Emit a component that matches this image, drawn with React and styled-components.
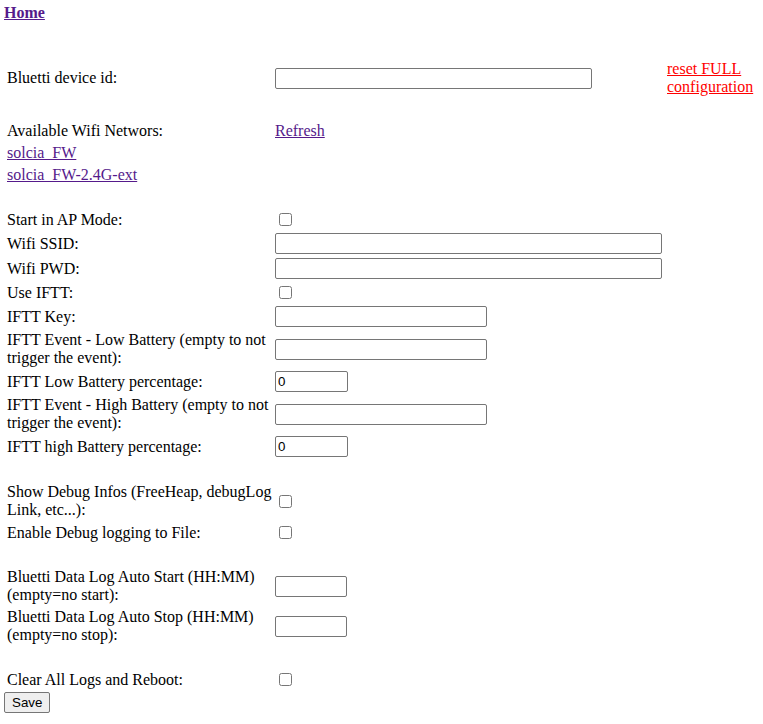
import React from 'react';
import styled, { createGlobalStyle } from 'styled-components';

const GlobalStyle = createGlobalStyle`
  body {
    margin: 4px;
    font-family: "Liberation Serif", "Times New Roman", serif;
    font-size: 16px;
    line-height: 18px;
    color: #000;
    background: #fff;
  }
`;

const HomeLink = styled.a`
  display: block;
  width: max-content;
  font-weight: bold;
  color: #551a8b;
  text-decoration: underline;
`;

const Table = styled.table`
  width: 100%;
  margin-top: 35px;
  border-collapse: separate;
  border-spacing: 2px;
  table-layout: fixed;
`;

const Cell = styled.td`
  padding: 1px;
  vertical-align: middle;
  height: 18px;
`;

// labels keep the line breaks of the original page
const LabelCell = styled(Cell)`
  white-space: pre;
  overflow: visible;
`;

const LinkCell = styled.a`
  color: ${(p) => p.$color || '#551a8b'};
  text-decoration: underline;
  cursor: pointer;
`;

const TextInput = styled.input`
  display: block;
  box-sizing: border-box;
  width: ${(p) => p.$w}px;
  height: 21px;
  margin: 0;
  padding: 1px 2px;
  border: 1px solid #767676;
  border-radius: 2px;
  font-family: "Liberation Sans", Arial, sans-serif;
  font-size: 13.33px;
  color: #000;
  background: #fff;
`;

const Check = styled.input`
  display: block;
  width: 13px;
  height: 13px;
  margin: 3px 3px 3px 4px;
`;

const SaveButton = styled.button`
  display: block;
  box-sizing: border-box;
  height: 21px;
  margin: 0;
  padding: 1px 7px;
  border: 1px solid #767676;
  border-radius: 2px;
  background: #efefef;
  font-family: "Liberation Sans", Arial, sans-serif;
  font-size: 13.33px;
  color: #000;
`;

const rows = [
  { label: 'Bluetti device id:', input: 317, reset: true },
  { empty: true },
  { label: 'Available Wifi Networs:', link: 'Refresh' },
  { linkLabel: 'solcia_FW' },
  { linkLabel: 'solcia_FW-2.4G-ext' },
  { empty: true },
  { label: 'Start in AP Mode:', check: true },
  { label: 'Wifi SSID:', input: 387 },
  { label: 'Wifi PWD:', input: 387 },
  { label: 'Use IFTT:', check: true },
  { label: 'IFTT Key:', input: 212 },
  { label: 'IFTT Event - Low Battery (empty to not\ntrigger the event):', input: 212 },
  { label: 'IFTT Low Battery percentage:', input: 73, value: '0' },
  { label: 'IFTT Event - High Battery (empty to not\ntrigger the event):', input: 212 },
  { label: 'IFTT high Battery percentage:', input: 73, value: '0' },
  { empty: true },
  { label: 'Show Debug Infos (FreeHeap, debugLog\nLink, etc...):', check: true },
  { label: 'Enable Debug logging to File:', check: true },
  { empty: true },
  { label: 'Bluetti Data Log Auto Start (HH:MM)\n(empty=no start):', input: 72 },
  { label: 'Bluetti Data Log Auto Stop (HH:MM)\n(empty=no stop):', input: 72 },
  { empty: true },
  { label: 'Clear All Logs and Reboot:', check: true },
];

const Row = ({ row }) => {
  if (row.empty) {
    return (
      <tr>
        <Cell>&nbsp;</Cell>
        <Cell />
        <Cell />
      </tr>
    );
  }
  if (row.linkLabel) {
    return (
      <tr>
        <Cell>
          <LinkCell href="#">{row.linkLabel}</LinkCell>
        </Cell>
        <Cell />
        <Cell />
      </tr>
    );
  }
  return (
    <tr>
      <LabelCell>{row.label}</LabelCell>
      <Cell>
        {row.input && <TextInput type="text" $w={row.input} defaultValue={row.value || ''} />}
        {row.check && <Check type="checkbox" />}
        {row.link && <LinkCell href="#">{row.link}</LinkCell>}
      </Cell>
      <Cell>
        {row.reset && <LinkCell href="#" $color="#ff0000">reset FULL configuration</LinkCell>}
      </Cell>
    </tr>
  );
};

export default function App() {
  return (
    <>
      <GlobalStyle />
      <HomeLink href="#">Home</HomeLink>
      <form onSubmit={(e) => e.preventDefault()}>
        <Table>
          <colgroup>
            <col style={{ width: 266 }} />
            <col style={{ width: 390 }} />
            <col />
          </colgroup>
          <tbody>
            {rows.map((r, i) => (
              <Row key={i} row={r} />
            ))}
          </tbody>
        </Table>
        <SaveButton type="submit">Save</SaveButton>
      </form>
    </>
  );
}
